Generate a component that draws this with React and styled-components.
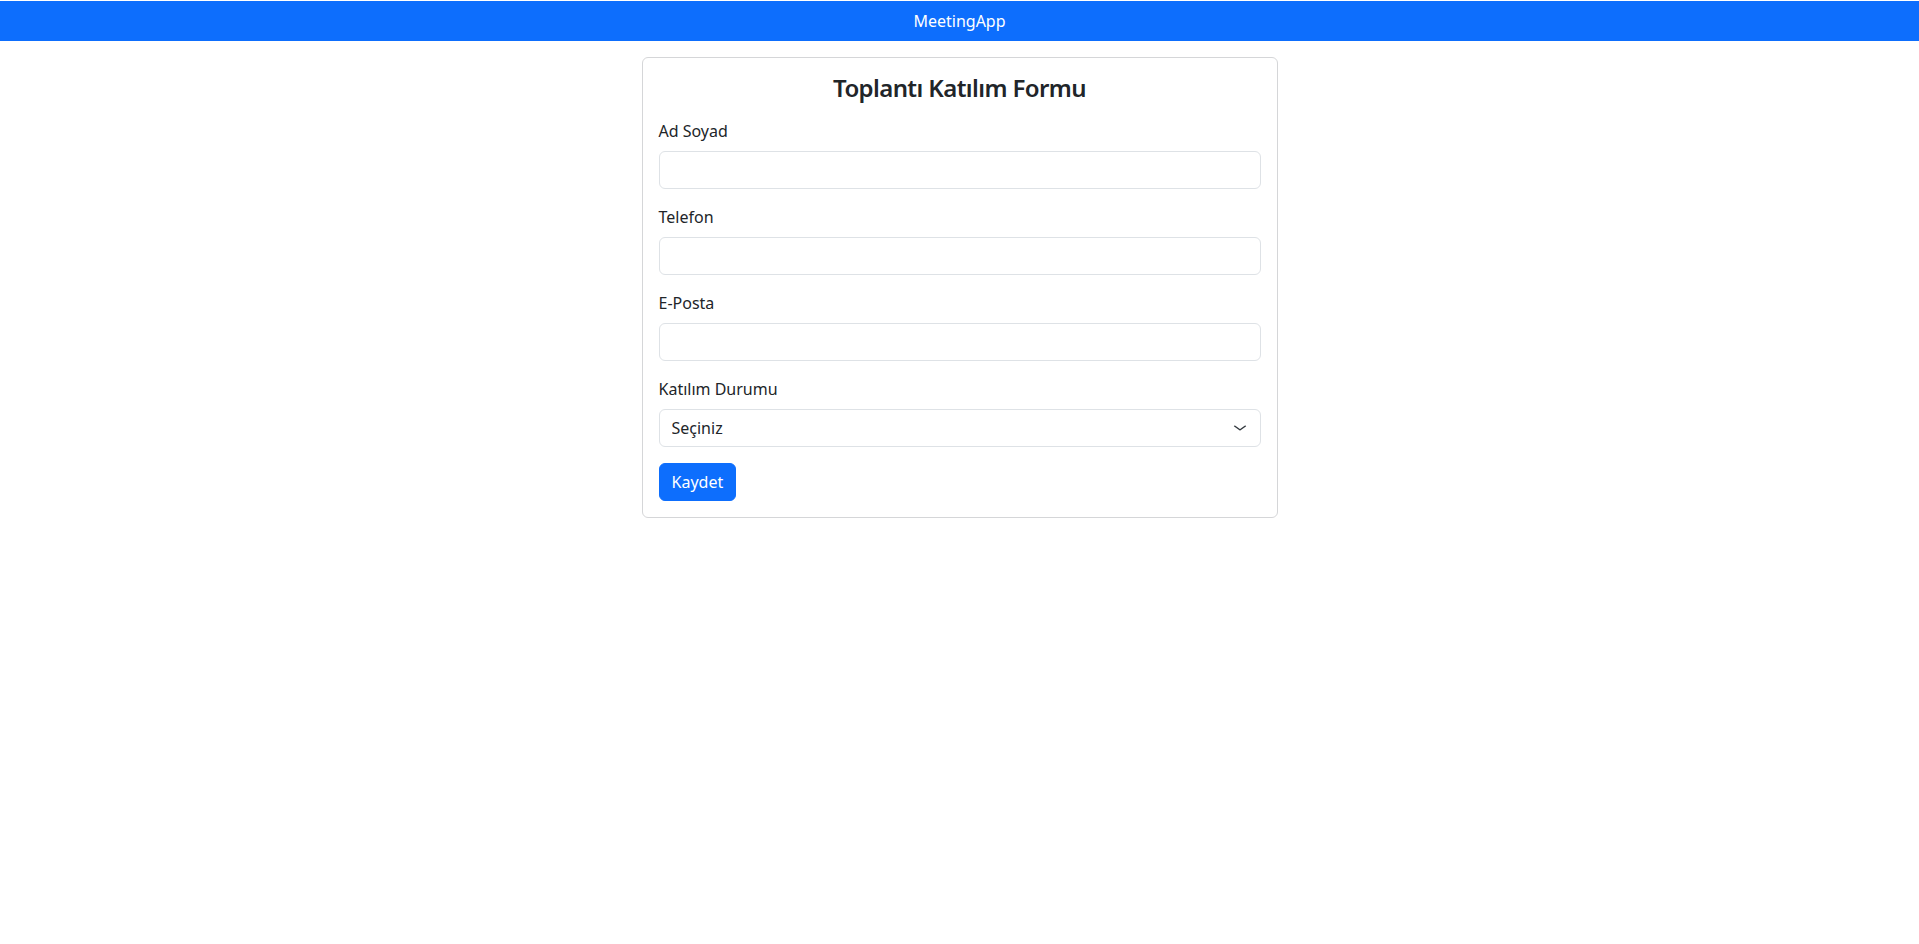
import React, { useState } from 'react';
import styled, { createGlobalStyle } from 'styled-components';

const GlobalStyle = createGlobalStyle`
  *, *::before, *::after {
    box-sizing: border-box;
  }

  body {
    margin: 0;
    padding-top: 1px;
    background: #fff;
    color: #212529;
    font-family: "Segoe UI", "Noto Sans", "Open Sans", sans-serif;
    font-size: 16px;
    line-height: 1.5;
  }
`;

const Navbar = styled.nav`
  height: 40px;
  background-color: #0d6efd;
  display: flex;
  align-items: center;
  justify-content: center;
`;

const Brand = styled.span`
  color: #fff;
  font-size: 16px;
`;

const Container = styled.div`
  max-width: 1320px;
  margin: 16px auto 0;
  padding: 0 12px;
  display: flex;
  justify-content: center;
`;

const Card = styled.div`
  width: 636px;
  border: 1px solid #d5d6d8;
  border-radius: 6px;
  padding: 16px;
  background: #fff;
`;

const Title = styled.h4`
  margin: 0 0 16px;
  font-size: 24px;
  font-weight: 600;
  letter-spacing: -0.6px;
  line-height: 1.2;
  text-align: center;
`;

const Field = styled.div`
  margin-bottom: 16px;
`;

const Label = styled.label`
  display: block;
  margin-bottom: 8px;
`;

const Input = styled.input`
  display: block;
  width: 100%;
  height: 38px;
  padding: 6px 12px;
  font: inherit;
  color: #212529;
  border: 1px solid #dee2e6;
  border-radius: 6px;
  background: #fff;
  outline: none;
`;

const SelectWrap = styled.div`
  position: relative;
`;

const Select = styled.select`
  display: block;
  width: 100%;
  height: 38px;
  padding: 6px 36px 6px 12px;
  font: inherit;
  color: #212529;
  border: 1px solid #dee2e6;
  border-radius: 6px;
  background: #fff;
  appearance: none;
  outline: none;
`;

const Chevron = styled.svg`
  position: absolute;
  right: 14px;
  top: 14px;
  width: 14px;
  height: 10px;
  pointer-events: none;
`;

const Button = styled.button`
  height: 38px;
  padding: 6px 12px;
  font: inherit;
  color: #fff;
  background-color: #0d6efd;
  border: 1px solid #0d6efd;
  border-radius: 6px;
  cursor: pointer;
`;

const fields = [
  { id: 'name', label: 'Ad Soyad', type: 'text' },
  { id: 'phone', label: 'Telefon', type: 'tel' },
  { id: 'email', label: 'E-Posta', type: 'email' },
];

export default function App() {
  const [status, setStatus] = useState('');

  return (
    <>
      <GlobalStyle />
      <Navbar>
        <Brand>MeetingApp</Brand>
      </Navbar>
      <Container>
        <Card>
          <Title>Toplantı Katılım Formu</Title>
          <form onSubmit={e => e.preventDefault()}>
            {fields.map(f => (
              <Field key={f.id}>
                <Label htmlFor={f.id}>{f.label}</Label>
                <Input id={f.id} type={f.type} />
              </Field>
            ))}
            <Field>
              <Label htmlFor="status">Katılım Durumu</Label>
              <SelectWrap>
                <Select id="status" value={status} onChange={e => setStatus(e.target.value)}>
                  <option value="">Seçiniz</option>
                  <option value="yes">Katılıyorum</option>
                  <option value="no">Katılmıyorum</option>
                </Select>
                <Chevron viewBox="0 0 16 16" preserveAspectRatio="none">
                  <path d="m2 5 6 6 6-6" fill="none" stroke="#343a40" strokeWidth="2" strokeLinecap="round" strokeLinejoin="round" />
                </Chevron>
              </SelectWrap>
            </Field>
            <Button type="submit">Kaydet</Button>
          </form>
        </Card>
      </Container>
    </>
  );
}
